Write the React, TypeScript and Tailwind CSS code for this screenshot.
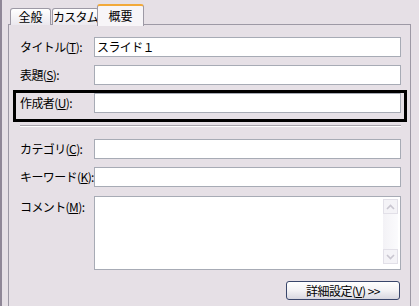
import React from "react";

const font = { fontFamily: '"Noto Sans CJK JP", "Liberation Sans", sans-serif' };

function Label({ text, k, top }: { text: string; k: string; top?: boolean }) {
  return (
    <div className={`w-[74px] shrink-0 text-[12px] leading-none text-black tracking-[-0.6px] ${top ? "self-start pt-[5px]" : ""}`}>
      {text}(<span className="underline underline-offset-1">{k}</span>):
    </div>
  );
}

function Field({ value }: { value?: string }) {
  return (
    <div className="flex-1 h-[20px] border border-[#a7abb5] bg-white flex items-center px-[2px] text-[12px] leading-none text-black tracking-[-0.6px]">
      {value}
    </div>
  );
}

function Chevron({ up }: { up?: boolean }) {
  return (
    <div className="w-[15px] h-[15px] border border-[#e2e0e8] bg-[#f4f3f7] flex items-center justify-center">
      <svg width="9" height="6" viewBox="0 0 9 6">
        <path d={up ? "M1 5 L4.5 1.5 L8 5" : "M1 1 L4.5 4.5 L8 1"} fill="none" stroke="#c9c6d0" strokeWidth="1.6" />
      </svg>
    </div>
  );
}

export default function App() {
  return (
    <div
      className="w-[419px] h-[306px] overflow-hidden bg-[#e6e0e6] border-l-2 border-[#8f8797] pl-[6px] pr-[8px]"
      style={font}
    >
      {/* tabs */}
      <div className="flex items-end h-[25px] pl-[2px]">
        <div className="w-[41px] h-[17px] border border-b-0 border-[#9d99a5] rounded-t-[3px] bg-gradient-to-b from-white to-[#ebe8ee] flex items-center justify-center text-[12px] leading-none text-black">
          全般
        </div>
        <div className="ml-[1px] w-[47px] h-[17px] border border-b-0 border-[#9d99a5] rounded-t-[3px] bg-gradient-to-b from-white to-[#ebe8ee] flex items-center justify-center text-[12px] leading-none text-black tracking-[-0.8px]">
          カスタム
        </div>
        <div className="relative z-10 -ml-[2px] -mb-px w-[47px] h-[22px] border border-b-0 border-[#9d99a5] border-t-[#f2a93a] border-t-2 rounded-t-[3px] bg-[#f7f5f8] flex items-center justify-center text-[12px] leading-none text-black">
          概要
        </div>
      </div>

      {/* panel */}
      <div className="h-[300px] border border-[#9d99a5] -mt-px pl-[11px] pr-[9px] flex flex-col">
        <div className="mt-[12px] flex items-center">
          <Label text="タイトル" k="T" />
          <Field value="スライド１" />
        </div>
        <div className="mt-[8px] flex items-center">
          <Label text="表題" k="S" />
          <Field />
        </div>
        <div className="relative mt-[8px] flex items-center">
          <Label text="作成者" k="U" />
          <Field />
          <span className="absolute -left-[7px] -top-[3px] -right-[6px] -bottom-[9px] border-[3px] border-black pointer-events-none" />
        </div>
        <div className="mt-[12px] h-[2px] border-t border-[#a9a5ad] border-b border-b-white" />
        <div className="mt-[12px] flex items-center">
          <Label text="カテゴリ" k="C" />
          <Field />
        </div>
        <div className="mt-[8px] flex items-center">
          <Label text="キーワード" k="K" />
          <Field />
        </div>
        <div className="mt-[9px] flex items-start">
          <Label text="コメント" k="M" top />
          <div className="flex-1 h-[74px] border border-[#a7abb5] bg-white flex justify-end pt-[2px] pr-[2px] pb-[5px]">
            <div className="w-[15px] flex flex-col justify-between bg-gradient-to-r from-[#f3f2f6] to-[#fbfbfd]">
              <Chevron up />
              <Chevron />
            </div>
          </div>
        </div>
        <div className="mt-[11px] flex justify-end pr-[1px]">
          <div className="w-[114px] h-[19px] rounded-[3px] border border-[#39466b] bg-gradient-to-b from-white via-[#f3f2f5] to-[#d8d7e0] flex items-center justify-center text-[12px] leading-none text-black tracking-[-0.5px]">
            詳細設定(<span className="underline underline-offset-1">V</span>) &gt;&gt;
          </div>
        </div>
      </div>
    </div>
  );
}
